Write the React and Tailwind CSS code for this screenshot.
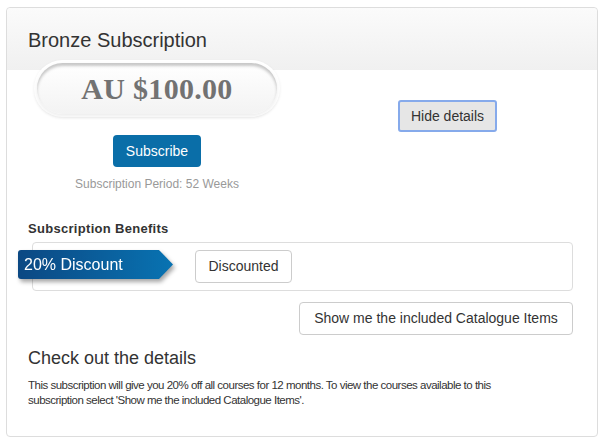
export default function App() {
  return (
    <div className="min-h-[443px] bg-white pl-[6px] pt-[7px] font-['Liberation_Sans',Arial,sans-serif] text-[#333]">
      <div className="w-[592px] h-[430px] rounded-[4px] border border-[#dddddd] bg-white">
        <div className="h-[62px] rounded-t-[4px] bg-gradient-to-b from-[#fbfbfb] to-[#f0f0f0] pl-[21px] pt-[20px]">
          <h2 className="text-[20px] leading-[24px] text-[#333]">Bronze Subscription</h2>
        </div>

        <div className="grid grid-cols-[300px_281px]">
          <div className="flex flex-col items-center">
            <div className="-mt-[10px] rounded-full bg-white p-[3px] shadow-[0_1px_3px_rgba(0,0,0,0.08)]">
              <div className="flex h-[51px] w-[240px] items-center justify-center rounded-full bg-gradient-to-b from-[#ffffff] to-[#f3f3f3] shadow-[inset_0_3px_3px_rgba(0,0,0,0.22),0_2px_4px_rgba(0,0,0,0.08)]">
                <span className="font-['Liberation_Serif',Georgia,serif] text-[30px] font-bold leading-none tracking-[0.3px] text-[#727272]">
                  AU $100.00
                </span>
              </div>
            </div>
            <button className="mt-[18px] h-[32px] w-[88px] rounded-[4px] bg-[#0a6ea8] text-[14px] text-white">
              Subscribe
            </button>
            <p className="mt-[9px] text-[12px] leading-[17px] text-[#999]">
              Subscription Period: 52 Weeks
            </p>
          </div>

          <div className="flex justify-center">
            <button className="mt-[30px] h-[32px] w-[99px] rounded-[3px] border-2 border-[#86aaeb] bg-[#e6e6e6] text-[14px] text-[#333]">
              Hide details
            </button>
          </div>
        </div>

        <div className="pl-[21px] pr-[24px]">
          <h3 className="mt-[27px] text-[13px] font-bold leading-[18px] tracking-[0.3px] text-[#333]">
            Subscription Benefits
          </h3>
          <div className="ml-[4px] mt-[4px] flex h-[49px] items-center rounded-[4px] border border-[#dddddd]">
            <div className="-ml-[15px] -mt-[4px] drop-shadow-[2px_3px_2px_rgba(0,0,0,0.35)]">
              <div className="flex h-[29px] w-[155px] items-center rounded-l-[3px] bg-gradient-to-r from-[#0b4883] to-[#0873b2] pl-[6px] text-[16px] text-white [clip-path:polygon(0_0,141px_0,155px_50%,141px_100%,0_100%)]">
                20% Discount
              </div>
            </div>
            <button className="ml-[22px] h-[33px] w-[97px] rounded-[4px] border border-[#cccccc] bg-white text-[14px] text-[#333]">
              Discounted
            </button>
          </div>
          <div className="mt-[11px] flex justify-end">
            <button className="h-[33px] w-[274px] rounded-[4px] border border-[#cccccc] bg-white text-[14px] text-[#333]">
              Show me the included Catalogue Items
            </button>
          </div>
          <h3 className="mt-[12px] text-[18px] leading-[22px] text-[#333]">Check out the details</h3>
          <p className="mt-[9px] max-w-[500px] text-[11.5px] leading-[15px] tracking-[-0.5px] text-[#333]">
            This subscription will give you 20% off all courses for 12 months. To view the courses available to this subscription select 'Show me the included Catalogue Items'.
          </p>
        </div>
      </div>
    </div>
  );
}
